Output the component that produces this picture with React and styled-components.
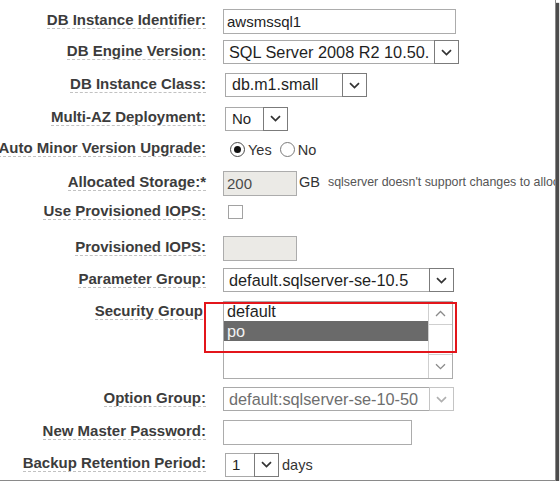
import React from 'react';
import styled, { createGlobalStyle } from 'styled-components';

const GlobalStyle = createGlobalStyle`
  html, body {
    margin: 0;
    padding: 0;
    background: #fff;
  }
  body {
    font-family: "Liberation Sans", Arial, sans-serif;
  }
`

const Frame = styled.div`
  position: relative;
  width: 555px;
  height: 480px;
  overflow: hidden;
  background: #fff;
  border-right: 1px solid #8a8a8a;
  border-bottom: 1px solid #8a8a8a;
  box-shadow: 3px 3px 1px #4c4c4c;
`

const Form = styled.div`
  display: flex;
  flex-direction: column;
`

const Row = styled.div`
  position: relative;
  display: flex;
  align-items: ${props => props.top ? 'flex-start' : 'center'};
  height: ${props => props.h}px;
  margin-top: ${props => props.m}px;
`

const LabelCell = styled.div`
  width: ${props => 206 - (props.pad || 0)}px;
  padding-right: ${props => props.pad || 0}px;
  margin-right: 17px;
  flex-shrink: 0;
  display: flex;
  justify-content: flex-end;
`

const Label = styled.span`
  flex-shrink: 0;
  white-space: nowrap;
  font-size: 15px;
  font-weight: bold;
  line-height: 17px;
  color: #3c3c3c;
  border-bottom: 1px dashed #c2c2c2;
  margin-bottom: ${props => props.top ? 0 : 3}px;
  margin-top: ${props => props.top ? 1 : 0}px;
`

const Controls = styled.div`
  display: flex;
  align-items: center;
  height: 100%;
`

const TextBox = styled.div`
  box-sizing: border-box;
  width: ${props => props.w}px;
  height: ${props => props.h}px;
  border: 1px solid #acacac;
  background: ${props => props.disabled ? '#ebeae6' : '#fff'};
  padding-left: 3px;
  font-size: 15px;
  line-height: ${props => props.h - 2}px;
  color: ${props => props.disabled ? '#4a4a4a' : '#222'};
  white-space: nowrap;
`

const SelectBox = styled.div`
  box-sizing: border-box;
  display: flex;
  width: ${props => props.w}px;
  height: ${props => props.h || 24}px;
  margin-left: ${props => props.inset || 0}px;
  border: 1px solid #a9a9a9;
  background: #fff;
`

const SelectValue = styled.div`
  flex: 1;
  min-width: 0;
  overflow: hidden;
  white-space: nowrap;
  padding-left: ${props => props.pad || 5}px;
  font-size: ${props => props.size || 16.3}px;
  display: flex;
  align-items: center;
  color: ${props => props.disabled ? '#6e6e6e' : '#1f1f1f'};
`

const ArrowButton = styled.div`
  box-sizing: border-box;
  width: 25px;
  flex-shrink: 0;
  margin: -1px -1px -1px 0;
  border: 1px solid ${props => props.disabled ? '#c4c4c4' : '#7b7b7b'};
  background: #fff;
  display: flex;
  align-items: center;
  justify-content: center;
`

const RadioGroup = styled.div`
  display: flex;
  align-items: center;
  margin-left: 7px;
  font-size: 14.5px;
  color: #333;
`

const RadioDot = styled.span`
  box-sizing: border-box;
  width: 15px;
  height: 15px;
  border-radius: 50%;
  border: 1px solid ${props => props.checked ? '#4a4a4a' : '#7a7a7a'};
  background: #fff;
  display: flex;
  align-items: center;
  justify-content: center;
  margin-right: 3px;

  &::after {
    content: '';
    display: ${props => props.checked ? 'block' : 'none'};
    width: 7px;
    height: 7px;
    border-radius: 50%;
    background: #111;
  }
`

const RadioText = styled.span`
  margin-right: ${props => props.gap || 0}px;
`

const CheckBox = styled.div`
  box-sizing: border-box;
  width: 15px;
  height: 14px;
  margin-left: 5px;
  border: 1px solid #a2a2a2;
  background: #fff;
`

const Unit = styled.span`
  font-size: 14.5px;
  color: #333;
  margin-left: ${props => props.gap || 2}px;
  margin-bottom: ${props => props.lift || 0}px;
  white-space: nowrap;
`

const Note = styled.span`
  font-size: 12.4px;
  color: #555;
  margin-left: 8px;
  margin-bottom: 4px;
  white-space: nowrap;
`

const ListBox = styled.div`
  box-sizing: border-box;
  display: flex;
  width: 230px;
  height: 78px;
  border: 1px solid #acacac;
  background: #fff;
`

const Options = styled.div`
  flex: 1;
  display: flex;
  flex-direction: column;
`

const Option = styled.div`
  height: ${props => props.selected ? 20 : 19}px;
  line-height: ${props => props.selected ? 20 : 19}px;
  padding-left: 3px;
  font-size: 16.3px;
  color: ${props => props.selected ? '#f2f2f2' : '#1f1f1f'};
  background: ${props => props.selected ? '#6a6a6a' : 'transparent'};
`

const ScrollBar = styled.div`
  width: 23px;
  border-left: 1px solid #cfcfcf;
  display: flex;
  flex-direction: column;
`

const ScrollButton = styled.div`
  height: ${props => props.h}px;
  display: flex;
  align-items: center;
  justify-content: center;
  border-top: ${props => props.down ? '1px solid #cfcfcf' : 'none'};
  border-bottom: ${props => props.down ? 'none' : '1px solid #cfcfcf'};
`

const ScrollTrack = styled.div`
  flex: 1;
`

const Highlight = styled.div`
  position: absolute;
  left: 204px;
  top: 1px;
  width: 253px;
  height: 51px;
  box-sizing: border-box;
  border: 2px solid #e3151b;
  pointer-events: none;
`

const Chevron = ({ up, color = '#333', width = 1.7 }) => (
  <svg width="11" height="7" viewBox="0 0 11 7">
    <path
      d={up ? 'M1 6 L5.5 1.5 L10 6' : 'M1 1.2 L5.5 5.6 L10 1.2'}
      fill="none"
      stroke={color}
      strokeWidth={width}
    />
  </svg>
)

const Select = ({ w, inset, value, disabled, size, pad }) => (
  <SelectBox w={w} inset={inset}>
    <SelectValue disabled={disabled} size={size} pad={pad}>{value}</SelectValue>
    <ArrowButton disabled={disabled}>
      <Chevron color={disabled ? '#b0b0b0' : '#333'} />
    </ArrowButton>
  </SelectBox>
)

const Field = ({ label, m, h, top, pad, children }) => (
  <Row m={m} h={h} top={top}>
    <LabelCell pad={pad}>
      <Label top={top}>{label}</Label>
    </LabelCell>
    <Controls>{children}</Controls>
  </Row>
)

export default function App() {
  return (
    <>
      <GlobalStyle />
      <Frame>
        <Form>
          <Field label="DB Instance Identifier:" m={9} h={25}>
            <TextBox w={233} h={25}>awsmssql1</TextBox>
          </Field>

          <Field label="DB Engine Version:" m={6} h={24}>
            <Select w={236} value="SQL Server 2008 R2 10.50." />
          </Field>

          <Field label="DB Instance Class:" m={9} h={24}>
            <Select w={142} inset={2} value="db.m1.small" size={16} pad={6} />
          </Field>

          <Field label="Multi-AZ Deployment:" m={10} h={23}>
            <Select w={63} inset={2} value="No" size={15} pad={6} />
          </Field>

          <Field label="Auto Minor Version Upgrade:" m={12} h={15}>
            <RadioGroup>
              <RadioDot checked />
              <RadioText gap={8}>Yes</RadioText>
              <RadioDot />
              <RadioText>No</RadioText>
            </RadioGroup>
          </Field>

          <Field label="Allocated Storage:*" m={14} h={25}>
            <TextBox w={74} h={25} disabled>200</TextBox>
            <Unit lift={4}>GB</Unit>
            <Note>sqlserver doesn't support changes to allocated storage</Note>
          </Field>

          <Field label="Use Provisioned IOPS:" m={9} h={14}>
            <CheckBox />
          </Field>

          <Field label="Provisioned IOPS:" m={17} h={25}>
            <TextBox w={74} h={25} disabled />
          </Field>

          <Field label="Parameter Group:" m={7} h={24}>
            <Select w={231} value="default.sqlserver-se-10.5" />
          </Field>

          <Field label="Security Group" m={9} h={78} top pad={3}>
            <ListBox>
              <Options>
                <Option>default</Option>
                <Option selected>po</Option>
              </Options>
              <ScrollBar>
                <ScrollButton h={22}>
                  <Chevron up color="#8a8a8a" width={1.3} />
                </ScrollButton>
                <ScrollTrack />
                <ScrollButton h={23} down>
                  <Chevron color="#8a8a8a" width={1.3} />
                </ScrollButton>
              </ScrollBar>
            </ListBox>
            <Highlight />
          </Field>

          <Field label="Option Group:" m={8} h={24}>
            <Select w={231} value="default:sqlserver-se-10-50" disabled />
          </Field>

          <Field label="New Master Password:" m={9} h={25}>
            <TextBox w={189} h={25} />
          </Field>

          <Field label="Backup Retention Period:" m={8} h={23}>
            <Select w={54} inset={2} value="1" size={15} pad={6} />
            <Unit gap={3}>days</Unit>
          </Field>
        </Form>
      </Frame>
    </>
  )
}
